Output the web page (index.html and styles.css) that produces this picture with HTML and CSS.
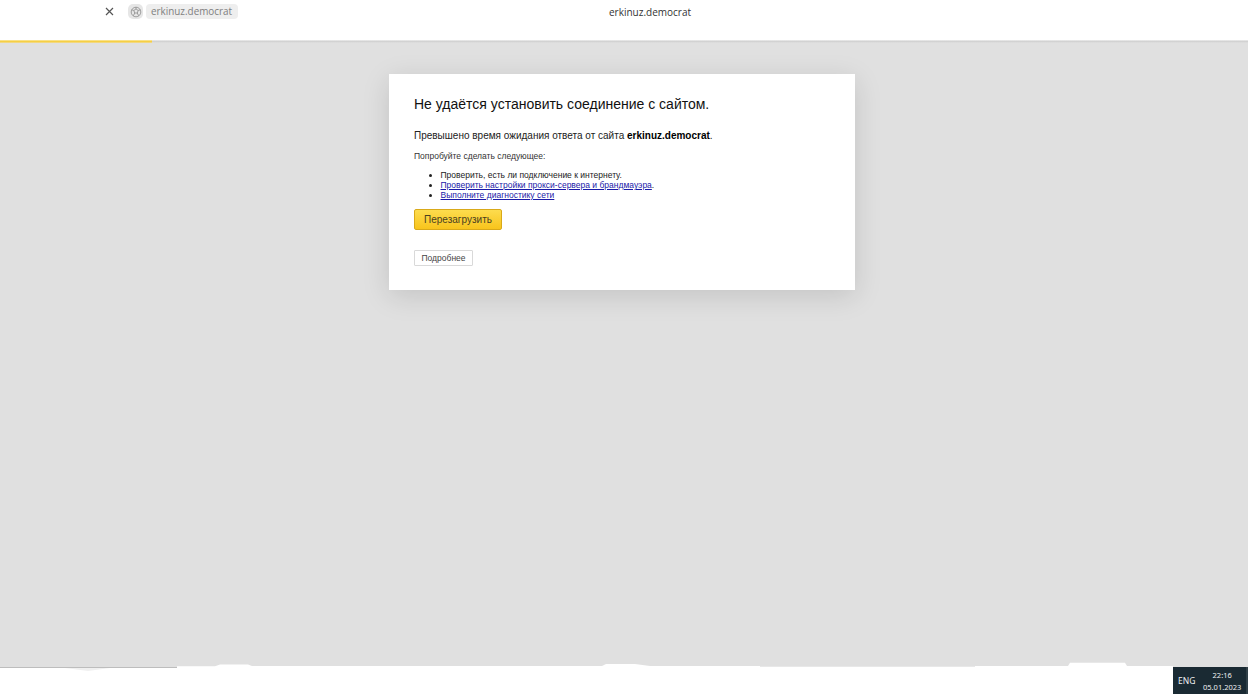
FILE: index.html
```html
<!DOCTYPE html>
<html lang="ru">
<head>
<meta charset="utf-8">
<title>erkinuz.democrat</title>
<link rel="stylesheet" href="styles.css">
</head>
<body>
<header class="topbar">
  <div class="tab-controls">
    <svg class="close" viewBox="0 0 9 9" width="9" height="9"><path d="M1 1l7 7M8 1l-7 7" stroke="#555" stroke-width="1.2" fill="none"/></svg>
    <span class="site-icon">
      <svg viewBox="0 0 14 14" width="12" height="12" fill="none" stroke="#888" stroke-width=".9"><circle cx="7" cy="7" r="5.6"/><path d="M4.5 5.2L7 3.4l2.5 1.8-1 3H5.500zM7 3.400V1.500M4.500 5.200L1.900 4.500M9.500 5.200l2.600-.7M5.500 8.200L4 11.300M8.500 8.200l1.500 3.100"/></svg>
    </span>
    <span class="address">erkinuz.democrat</span>
  </div>
  <div class="page-title">erkinuz.democrat</div>
</header>
<div class="progress"><div class="progress-fill"></div></div>
<main class="content">
  <section class="dialog">
    <h1>Не удаётся установить соединение с сайтом.</h1>
    <p class="summary">Превышено время ожидания ответа от сайта <b>erkinuz.democrat</b>.</p>
    <p class="hint">Попробуйте сделать следующее:</p>
    <ul class="steps">
      <li>Проверить, есть ли подключение к интернету.</li>
      <li><a href="#">Проверить настройки прокси-сервера и брандмауэра</a>.</li>
      <li><a href="#">Выполните диагностику сети</a></li>
    </ul>
    <button class="reload">Перезагрузить</button>
    <button class="details">Подробнее</button>
  </section>
</main>
<footer class="bottom">
  <svg class="edge" viewBox="0 0 1173 32" width="1173" height="32"><path d="M0 5.500H177V4.300H215L220 2.500H248L252 4H602L606 2H635L650 4H760V4.700H975V4H1068L1070 .7H1125L1127 4H1173V32H0Z" fill="#fff"/><path d="M0 5.500H177" stroke="#bdbdbd" stroke-width="1" fill="none"/><path d="M65 6H110L88 9Z" fill="#f0f0f0"/></svg>
  <div class="tray">
    <span class="lang">ENG</span>
    <div class="clock"><span>22:16</span><span>05.01.2023</span></div>
  </div>
</footer>
</body>
</html>
```
FILE: styles.css
```css
html, body { margin: 0; height: 100%; }
body {
  width: 1248px;
  height: 694px;
  overflow: hidden;
  display: flex;
  flex-direction: column;
  background: #e0e0e0;
  font-family: "Liberation Sans", Arial, sans-serif;
  color: #111;
}
.topbar {
  height: 40px;
  flex: none;
  background: #fff;
  display: flex;
  align-items: flex-start;
  position: relative;
}
.tab-controls {
  display: flex;
  align-items: center;
  height: 23px;
  padding-left: 105px;
}
.close { margin-right: 14px; }
.site-icon {
  width: 15px;
  height: 15px;
  border-radius: 5px;
  background: #e6e6e6;
  display: flex;
  align-items: center;
  justify-content: center;
  margin-right: 3px;
}
.address {
  height: 15px;
  padding: 0 6px 0 5px;
  border-radius: 4px;
  background: #eeeeee;
  color: #808080;
  font: 9.9px/15px "Open Sans", sans-serif;
}
.page-title {
  position: absolute;
  left: 609px;
  top: 4px;
  font: 10px/16px "Open Sans", sans-serif;
  color: #333;
}
.progress {
  height: 3px;
  flex: none;
  background: linear-gradient(#eeeeee, #d2d2d2 50%, #e0e0e0);
}
.progress-fill {
  width: 152px;
  height: 3px;
  background: linear-gradient(#fbeaa8, #f5cf45 50%, #f0dc9c);
}
.content {
  flex: 1;
  padding: 31px 0 0 389px;
  min-height: 0;
}
.dialog {
  box-sizing: border-box;
  width: 466px;
  height: 216px;
  padding: 22px 25px 0;
  background: #fff;
  box-shadow: 0 6px 26px rgba(0, 0, 0, .13);
}
h1 {
  margin: 0;
  font-size: 14px;
  line-height: 17px;
  font-weight: 400;
  color: #111;
}
.summary {
  margin: 17px 0 0;
  font-size: 10px;
  line-height: 12px;
  color: #222;
}
.summary b { color: #000; }
.hint {
  margin: 9px 0 0;
  font-size: 8.5px;
  line-height: 11px;
  color: #333;
}
.steps {
  margin: 8px 0 0;
  padding: 0 0 0 26.500px;
  font-size: 8.5px;
  line-height: 10px;
  color: #222;
}
.steps a { color: #1a1aa8; text-decoration: underline; }
.reload {
  display: block;
  box-sizing: border-box;
  width: 88px;
  height: 21px;
  margin: 9px 0 0;
  padding: 0;
  border: 1px solid #d9a919;
  border-radius: 2px;
  background: linear-gradient(#fddc4e, #f8c41c);
  font: 10px "Liberation Sans", Arial, sans-serif;
  color: #4a4020;
}
.details {
  display: block;
  box-sizing: border-box;
  width: 59px;
  height: 16px;
  margin: 20px 0 0;
  padding: 0;
  border: 1px solid #d9d9d9;
  border-radius: 1px;
  background: #fff;
  font: 8.5px "Liberation Sans", Arial, sans-serif;
  color: #444;
}
.bottom {
  height: 32px;
  flex: none;
  display: flex;
  align-items: flex-end;
}
.edge { display: block; flex: none; }
.tray {
  width: 75px;
  height: 27px;
  flex: none;
  box-sizing: border-box;
  background: #1a2a33;
  border-right: 2px solid #2f3f47;
  display: flex;
  align-items: center;
  color: #eef1f2;
  font: 8.500px "Noto Sans", sans-serif;
}
.lang { margin-left: 5px; width: 20px; font-size: 8.5px; }
.clock {
  display: flex;
  flex-direction: column;
  align-items: center;
  margin-left: 5px;
  line-height: 12px;
  font-size: 7.5px;
}
```
